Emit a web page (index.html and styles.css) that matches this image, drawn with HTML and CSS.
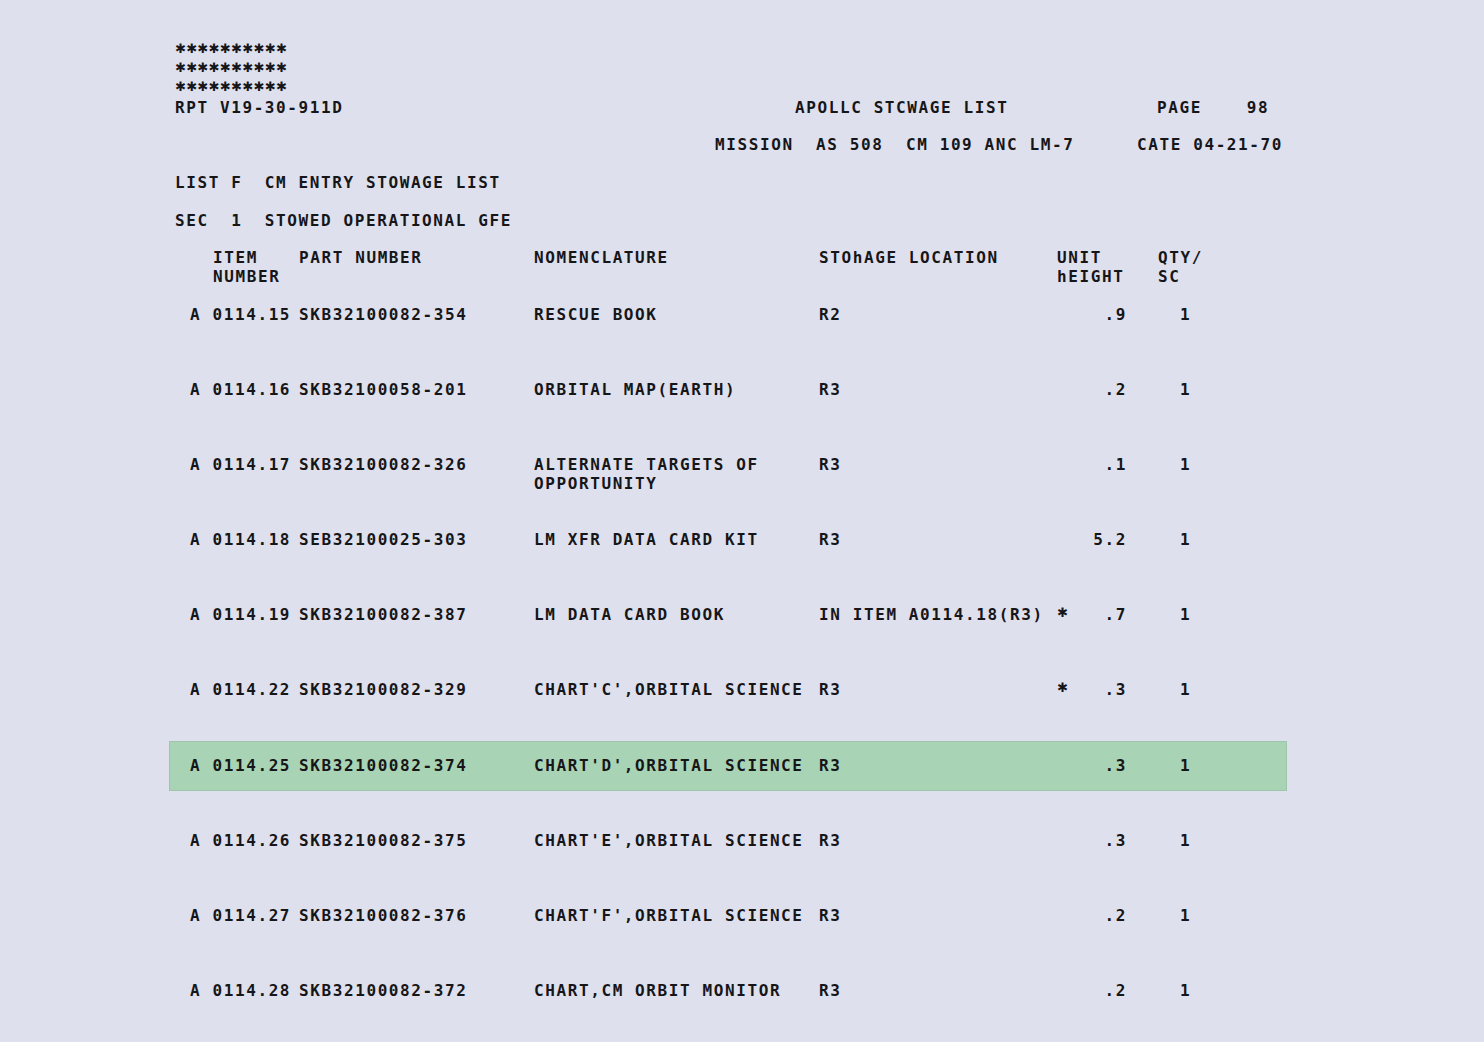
FILE: index.html
```html
<!DOCTYPE html>
<html>
<head>
<meta charset="utf-8">
<title>Apollo Stowage List</title>
<link rel="stylesheet" href="styles.css">
</head>
<body>
<div class="sheet">
  <div class="head">
    <div class="line stars"><span class="st">✱</span><span class="st">✱</span><span class="st">✱</span><span class="st">✱</span><span class="st">✱</span><span class="st">✱</span><span class="st">✱</span><span class="st">✱</span><span class="st">✱</span><span class="st">✱</span></div>
    <div class="line stars"><span class="st">✱</span><span class="st">✱</span><span class="st">✱</span><span class="st">✱</span><span class="st">✱</span><span class="st">✱</span><span class="st">✱</span><span class="st">✱</span><span class="st">✱</span><span class="st">✱</span></div>
    <div class="line stars"><span class="st">✱</span><span class="st">✱</span><span class="st">✱</span><span class="st">✱</span><span class="st">✱</span><span class="st">✱</span><span class="st">✱</span><span class="st">✱</span><span class="st">✱</span><span class="st">✱</span></div>
    <div class="line title-line"><span>RPT V19-30-911D</span><span>APOLLC STCWAGE LIST</span><span>PAGE    98</span></div>
    <div class="line"></div>
    <div class="line mission-line"><span>MISSION  AS 508  CM 109 ANC LM-7</span><span>CATE 04-21-70</span></div>
    <div class="line"></div>
    <div class="line">LIST F  CM ENTRY STOWAGE LIST</div>
    <div class="line"></div>
    <div class="line">SEC  1  STOWED OPERATIONAL GFE</div>
    <div class="line"></div>
  </div>

  <div class="table">
    <div class="thead">
      <div class="c-item hd-item">ITEM<br>NUMBER</div>
      <div class="c-part">PART NUMBER</div>
      <div class="c-nom">NOMENCLATURE</div>
      <div class="c-loc">STOhAGE LOCATION</div>
      <div class="c-wt hd-wt">UNIT<br>hEIGHT</div>
      <div class="c-qty">QTY/<br>SC</div>
    </div>

    <div class="row">
      <div class="c-item">A 0114.15</div><div class="c-part">SKB32100082-354</div>
      <div class="c-nom">RESCUE BOOK</div><div class="c-loc">R2</div>
      <div class="c-wt"><span class="flag"></span><span class="val">.9</span></div><div class="c-qty"><span class="q">1</span></div>
    </div>
    <div class="row">
      <div class="c-item">A 0114.16</div><div class="c-part">SKB32100058-201</div>
      <div class="c-nom">ORBITAL MAP(EARTH)</div><div class="c-loc">R3</div>
      <div class="c-wt"><span class="flag"></span><span class="val">.2</span></div><div class="c-qty"><span class="q">1</span></div>
    </div>
    <div class="row">
      <div class="c-item">A 0114.17</div><div class="c-part">SKB32100082-326</div>
      <div class="c-nom">ALTERNATE TARGETS OF<br>OPPORTUNITY</div><div class="c-loc">R3</div>
      <div class="c-wt"><span class="flag"></span><span class="val">.1</span></div><div class="c-qty"><span class="q">1</span></div>
    </div>
    <div class="row">
      <div class="c-item">A 0114.18</div><div class="c-part">SEB32100025-303</div>
      <div class="c-nom">LM XFR DATA CARD KIT</div><div class="c-loc">R3</div>
      <div class="c-wt"><span class="flag"></span><span class="val">5.2</span></div><div class="c-qty"><span class="q">1</span></div>
    </div>
    <div class="row">
      <div class="c-item">A 0114.19</div><div class="c-part">SKB32100082-387</div>
      <div class="c-nom">LM DATA CARD BOOK</div><div class="c-loc">IN ITEM A0114.18(R3)</div>
      <div class="c-wt"><span class="flag"><span class="st">✱</span></span><span class="val">.7</span></div><div class="c-qty"><span class="q">1</span></div>
    </div>
    <div class="row">
      <div class="c-item">A 0114.22</div><div class="c-part">SKB32100082-329</div>
      <div class="c-nom">CHART'C',ORBITAL SCIENCE</div><div class="c-loc">R3</div>
      <div class="c-wt"><span class="flag"><span class="st">✱</span></span><span class="val">.3</span></div><div class="c-qty"><span class="q">1</span></div>
    </div>
    <div class="row row-hl">
      <div class="c-item">A 0114.25</div><div class="c-part">SKB32100082-374</div>
      <div class="c-nom">CHART'D',ORBITAL SCIENCE</div><div class="c-loc">R3</div>
      <div class="c-wt"><span class="flag"></span><span class="val">.3</span></div><div class="c-qty"><span class="q">1</span></div>
    </div>
    <div class="row">
      <div class="c-item">A 0114.26</div><div class="c-part">SKB32100082-375</div>
      <div class="c-nom">CHART'E',ORBITAL SCIENCE</div><div class="c-loc">R3</div>
      <div class="c-wt"><span class="flag"></span><span class="val">.3</span></div><div class="c-qty"><span class="q">1</span></div>
    </div>
    <div class="row">
      <div class="c-item">A 0114.27</div><div class="c-part">SKB32100082-376</div>
      <div class="c-nom">CHART'F',ORBITAL SCIENCE</div><div class="c-loc">R3</div>
      <div class="c-wt"><span class="flag"></span><span class="val">.2</span></div><div class="c-qty"><span class="q">1</span></div>
    </div>
    <div class="row">
      <div class="c-item">A 0114.28</div><div class="c-part">SKB32100082-372</div>
      <div class="c-nom">CHART,CM ORBIT MONITOR</div><div class="c-loc">R3</div>
      <div class="c-wt"><span class="flag"></span><span class="val">.2</span></div><div class="c-qty"><span class="q">1</span></div>
    </div>
  </div>
</div>
</body>
</html>
```
FILE: styles.css
```css
html, body {
  margin: 0;
  padding: 0;
  background: #dfe0ee;
}

body {
  font-family: "DejaVu Sans Mono", "Liberation Mono", monospace;
  font-size: 16px;
  font-weight: bold;
  letter-spacing: 1.6px;
  line-height: 18.8px;
  color: #161618;
}

.sheet {
  padding: 42.4px 0 0 169px;
  width: 1118px;
  height: 999px;
  overflow: hidden;
}

.head {
  padding-left: 6px;
}

.line {
  height: 18.8px;
  white-space: pre;
}

.stars {
  display: flex;
  align-items: center;
}

.st {
  display: inline-flex;
  justify-content: center;
  align-items: center;
  box-sizing: border-box;
  width: 11.23px;
  height: 18.8px;
  padding-bottom: 4px;
  font-family: "DejaVu Sans", sans-serif;
  font-size: 13px;
  letter-spacing: 0;
  font-weight: bold;
}

.title-line {
  display: grid;
  grid-template-columns: 620px 362px auto;
}

.mission-line {
  display: grid;
  grid-template-columns: 422px auto;
  padding-left: 540px;
}

.thead,
.row {
  display: grid;
  grid-template-columns: 109px 235px 285px 238px 101px 1fr;
  padding-left: 21px;
}

.thead > div,
.row > div {
  white-space: pre;
}

.thead {
  height: 40.8px;
}

.row {
  box-sizing: border-box;
  height: 50px;
  padding-top: 15.6px;
  margin-bottom: 25.2px;
}

.row-hl {
  background: #a9d3b5;
  box-shadow: inset 0 0 0 1px #9ec5a9;
}

.hd-item {
  padding-left: 23px;
}

.c-wt {
  display: flex;
  justify-content: space-between;
  align-items: flex-start;
  padding-right: 31px;
}

.hd-wt {
  display: block;
  padding-right: 0;
}

.flag {
  display: inline-flex;
  height: 18.8px;
  align-items: center;
}

.q {
  padding-left: 22px;
}
```
